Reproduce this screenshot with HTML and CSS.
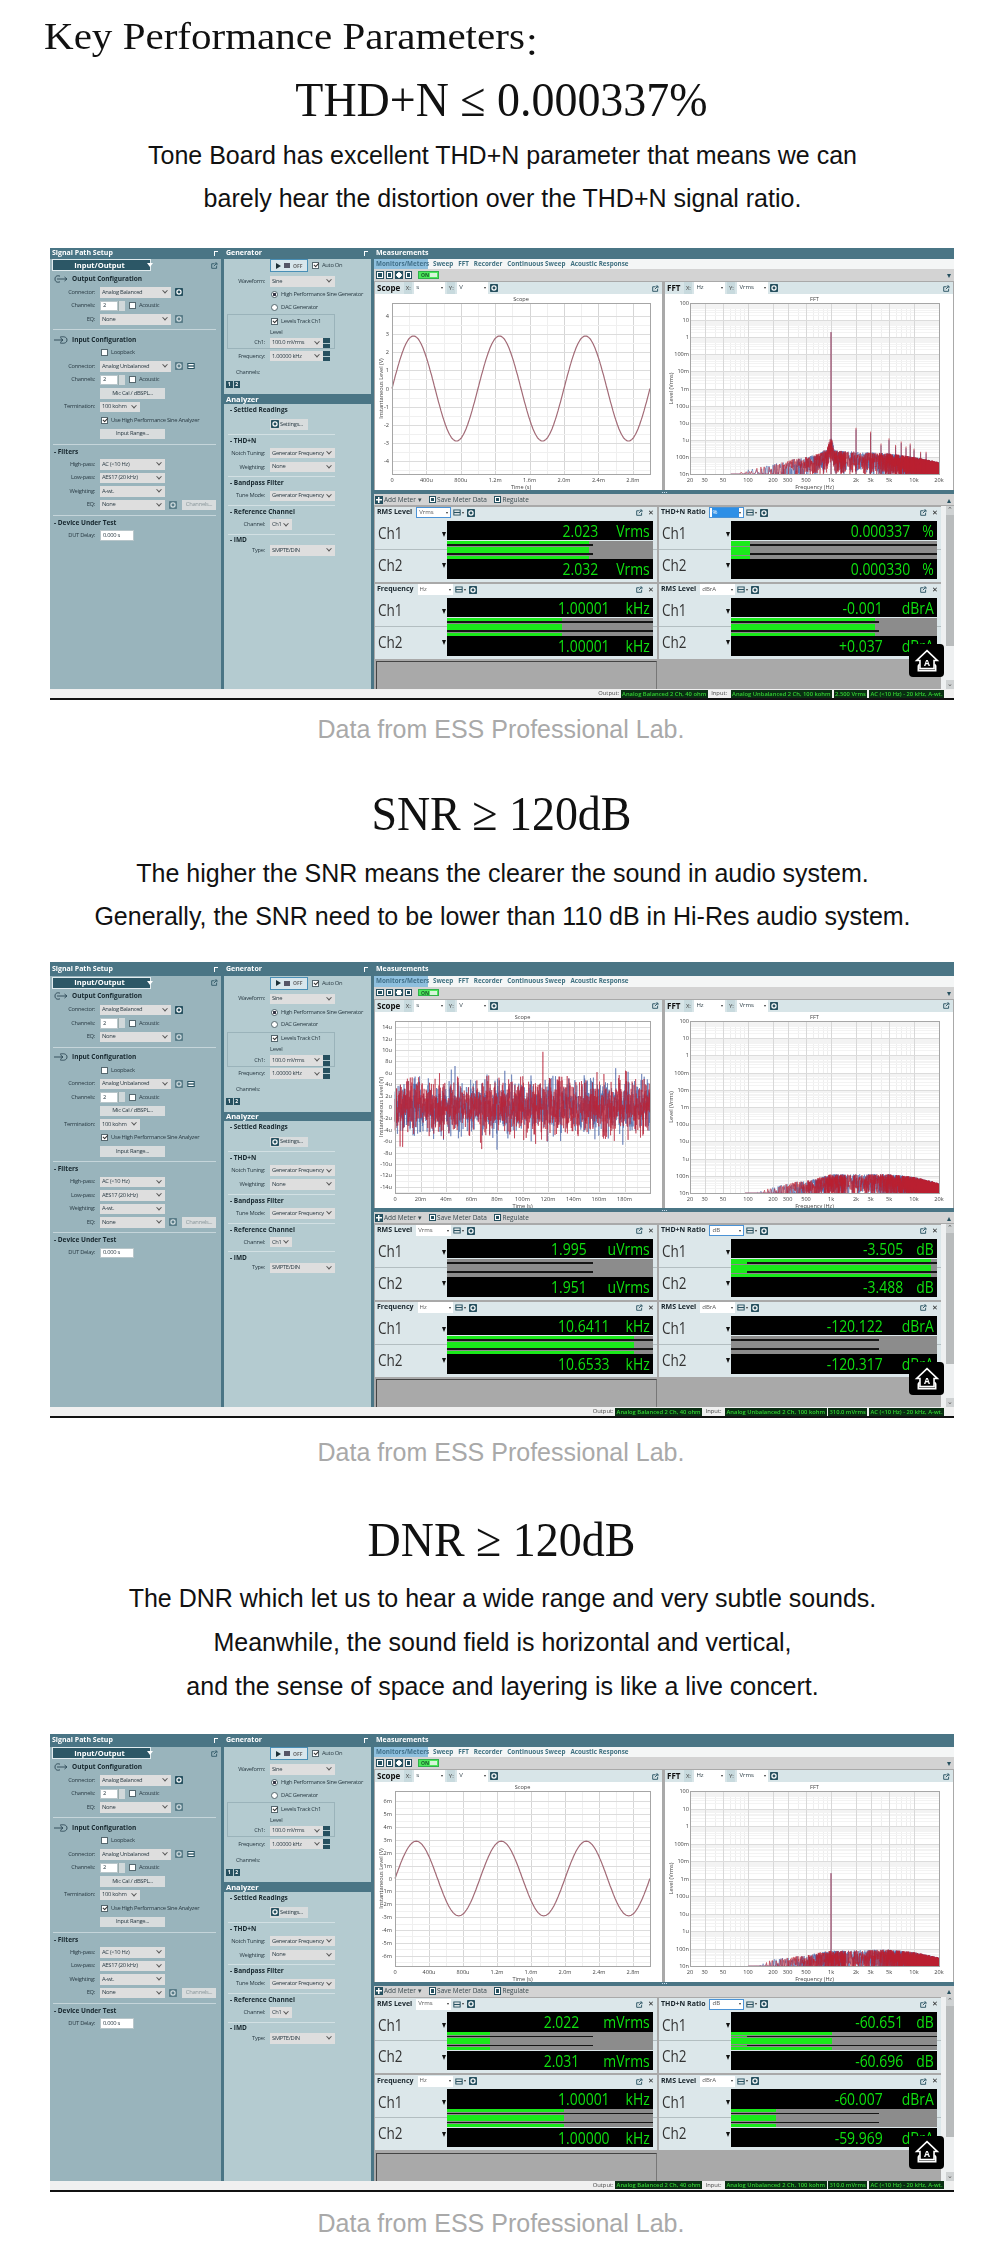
FILE: index.html
```html
<!DOCTYPE html>
<html lang="en">
<head>
<meta charset="utf-8">
<title>Key Performance Parameters</title>
<link rel="stylesheet" href="styles.css">
</head>
<body>
<svg class="defs" width="0" height="0" aria-hidden="true">
  <symbol id="i-gear" viewBox="0 0 10 10"><rect width="10" height="10" rx="1"/><circle cx="5" cy="5" r="2.6" fill="none" stroke="#fff" stroke-width="1.5"/></symbol>
  <symbol id="i-ext" viewBox="0 0 10 10"><path d="M1 2.500h4M1 2.500v6.500h7v-3.500" fill="none" stroke="#26505f" stroke-width="1.300"/><path d="M4 6l4-4M5.500 1.500h3v3" fill="none" stroke="#26505f" stroke-width="1.300"/></symbol>
  <symbol id="i-out" viewBox="0 0 14 8"><path d="M6 1.200C3.500.2 1 1 1 4s2.500 3.800 5 2.800" fill="none" stroke="#2b4653" stroke-width=".9"/><path d="M3 4h10M10.500 2l2.500 2-2.500 2" fill="none" stroke="#2b4653" stroke-width=".9"/></symbol>
  <symbol id="i-in" viewBox="0 0 14 8"><path d="M6 1.200c3-1 7-.5 7 2.800s-4 3.800-7 2.800" fill="none" stroke="#2b4653" stroke-width=".9"/><path d="M0 4h9M6.500 2L9 4 6.500 6" fill="none" stroke="#2b4653" stroke-width=".9"/></symbol>
  <symbol id="i-meter" viewBox="0 0 12 10"><rect x=".5" y=".5" width="11" height="9" fill="#26505f"/><rect x="2" y="2" width="8" height="2" fill="#fff"/><rect x="2" y="6" width="8" height="2" fill="#fff"/></symbol>
</svg>

<template id="analyzer">
  <div class="app">
    <div class="workspace">
      <aside class="side path">
        <div class="coltitle"><span>Signal Path Setup</span><span class="pin"></span></div>
        <div class="iorow"><div class="iosel"><span>Input/Output</span><span class="iotri"></span></div><svg class="ico ext pale"><use href="#i-ext"/></svg></div>
        <div class="sec sec-a"><svg class="secico"><use href="#i-out"/></svg>Output Configuration</div>
        <div class="row"><label>Connector:</label><span class="sel w71">Analog Balanced</span><svg class="ico gearb"><use href="#i-gear"/></svg></div>
        <div class="row"><label>Channels:</label><span class="num w18">2</span><span class="spin"></span><span class="chk"></span><span>Acoustic</span></div>
        <div class="row"><label>EQ:</label><span class="sel w71">None</span><svg class="ico gearb dim"><use href="#i-gear"/></svg></div>
        <div class="rule r3"></div>
        <div class="sec sec-b"><svg class="secico"><use href="#i-in"/></svg>Input Configuration</div>
        <div class="row"><label></label><span class="chk"></span><span>Loopback</span></div>
        <div class="row"><label>Connector:</label><span class="sel w71">Analog Unbalanced</span><svg class="ico gearb dim"><use href="#i-gear"/></svg><svg class="ico gearb"><use href="#i-meter"/></svg></div>
        <div class="row"><label>Channels:</label><span class="num w18">2</span><span class="spin"></span><span class="chk"></span><span>Acoustic</span></div>
        <div class="row"><label></label><span class="btn w65">Mic Cal / dBSPL...</span></div>
        <div class="row"><label>Termination:</label><span class="sel w40">100 kohm</span></div>
        <div class="row"><label></label><span class="chk on"></span><span>Use High Performance Sine Analyzer</span></div>
        <div class="row"><label></label><span class="btn w65">Input Range...</span></div>
        <div class="rule r3"></div>
        <div class="sec sec-c">- Filters</div>
        <div class="row"><label>High-pass:</label><span class="sel w65">AC (&lt;10 Hz)</span></div>
        <div class="row"><label>Low-pass:</label><span class="sel w65">AES17 (20 kHz)</span></div>
        <div class="row"><label>Weighting:</label><span class="sel w65">A-wt.</span></div>
        <div class="row"><label>EQ:</label><span class="sel w65">None</span><svg class="ico gearb dim"><use href="#i-gear"/></svg><span class="btn w34 off">Channels...</span></div>
        <div class="rule r3"></div>
        <div class="sec sec-c">- Device Under Test</div>
        <div class="row"><label>DUT Delay:</label><span class="num w34">0.000 s</span></div>
      </aside>

      <aside class="side gen">
        <div class="coltitle"><span>Generator</span><span class="pin"></span></div>
        <div class="row tall"><label></label><span class="runbtn"><span class="play"></span><span class="stop"></span><span>OFF</span></span><span class="chk on"></span><span>Auto On</span></div>
        <div class="row wave"><label>Waveform:</label><span class="sel w65">Sine</span></div>
        <div class="row r13"><label></label><span class="radio on"></span><span>High Performance Sine Generator</span></div>
        <div class="row r12"><label></label><span class="radio"></span><span>DAC Generator</span></div>
        <div class="frame">
          <div class="row r12"><label></label><span class="chk on"></span><span>Levels Track Ch1</span></div>
          <div class="row r10"><label></label><span>Level</span></div>
          <div class="row r11"><label>Ch1:</label><span class="sel w53" data-slot="level"></span><span class="updown"></span></div>
        </div>
        <div class="row"><label>Frequency:</label><span class="sel w53">1.00000 kHz</span><span class="updown"></span></div>
        <div class="row chan"><span class="free">Channels:</span></div>
        <div class="chanbtns"><span>1</span><span>2</span></div>
        <div class="coltitle band"><span>Analyzer</span></div>
        <div class="sec sec-d">- Settled Readings</div>
        <div class="row sett"><label></label><span class="setbtn"><svg class="ico"><use href="#i-gear"/></svg>Settings...</span></div>
        <div class="rule rs"></div>
        <div class="sec sec-d">- THD+N</div>
        <div class="row"><label>Notch Tuning:</label><span class="sel w65">Generator Frequency</span></div>
        <div class="row"><label>Weighting:</label><span class="sel w65">None</span></div>
        <div class="rule rs"></div>
        <div class="sec sec-d">- Bandpass Filter</div>
        <div class="row"><label>Tune Mode:</label><span class="sel w65">Generator Frequency</span></div>
        <div class="rule rs"></div>
        <div class="sec sec-d">- Reference Channel</div>
        <div class="row"><label>Channel:</label><span class="sel w22">Ch1</span></div>
        <div class="rule rs"></div>
        <div class="sec sec-d sec-tight">- IMD</div>
        <div class="row r11"><label>Type:</label><span class="sel w65">SMPTE/DIN</span></div>
      </aside>

      <main class="measure">
        <div class="coltitle"><span>Measurements</span></div>
        <nav class="tabs"><span class="tab active">Monitors/Meters</span><span class="tab">Sweep</span><span class="tab">FFT</span><span class="tab">Recorder</span><span class="tab">Continuous Sweep</span><span class="tab">Acoustic Response</span></nav>
        <div class="tools">
          <span class="tool"></span><span class="tool"></span><span class="tool round"></span><span class="tool"></span>
          <span class="onsw"><span>ON</span><i></i></span>
          <span class="filter">&#9662;</span>
        </div>
        <div class="charts">
          <section class="chart scope">
            <header class="chead"><b>Scope</b><span class="ax">X:</span><span class="cbo">s</span><span class="ax">Y:</span><span class="cbo">V</span><svg class="ico gsm"><use href="#i-gear"/></svg><svg class="ico ext"><use href="#i-ext"/></svg></header>
            <div class="plot" data-plot="scope"></div>
          </section>
          <section class="chart fft">
            <header class="chead"><b>FFT</b><span class="ax">X:</span><span class="cbo">Hz</span><span class="ax">Y:</span><span class="cbo">Vrms</span><svg class="ico gsm"><use href="#i-gear"/></svg><svg class="ico ext"><use href="#i-ext"/></svg></header>
            <div class="plot" data-plot="fft"></div>
          </section>
        </div>
        <div class="split"><i></i><i></i><i></i></div>
        <div class="tools two">
          <span class="mbtn"><span class="plus"></span>Add Meter &#9662;</span>
          <span class="mbtn"><span class="tool save"></span>Save Meter Data</span>
          <span class="mbtn"><span class="tool reg"></span>Regulate</span>
          <span class="filter">&#9652;</span>
        </div>
        <div class="meterarea">
          <div class="meterwrap">
            <div class="meters" data-slot="meters"></div>
            <div class="empty"></div>
          </div>
          <div class="scroll"><span class="arrow">&#8963;</span><span class="thumb"></span><span class="trk"></span><span class="arrow">&#8964;</span></div>
        </div>
      </main>
    </div>
    <footer class="status">
      <span>Output:</span><span class="pill">Analog Balanced 2 Ch, 40 ohm</span>
      <span>Input:</span><span class="pill">Analog Unbalanced 2 Ch, 100 kohm</span><span class="pill" data-slot="inputlevel"></span><span class="pill">AC (&lt;10 Hz) - 20 kHz, A-wt.</span>
    </footer>
    <div class="badge">
      <svg viewBox="0 0 24 24"><path d="M12 2.500L21.500 11.500H18.500V19H5.500V11.500H2.500Z" fill="none" stroke="#fff" stroke-width="1.500"/><path d="M5 15l-1 1.500V21H20v-4.500L19 15" fill="none" stroke="#fff" stroke-width="1.500"/><text x="12" y="16.500" text-anchor="middle">A</text></svg>
    </div>
  </div>
</template>

<template id="meter">
  <article class="meter">
    <header class="mhead"><b data-m="title"></b><span class="cbo" data-m="unit"></span><svg class="ico mi"><use href="#i-meter"/></svg><span class="mtri"></span><svg class="ico gsm"><use href="#i-gear"/></svg><svg class="ico ext"><use href="#i-ext"/></svg><span class="cross">&#10005;</span></header>
    <div class="chrow first">
      <div class="chlab"><span>Ch1</span><i></i></div>
      <div class="chval"><div class="readout" data-m="r1"></div><div class="bars" data-m="b1"></div></div>
    </div>
    <div class="chrow">
      <div class="chlab"><span>Ch2</span><i></i></div>
      <div class="chval"><div class="bars" data-m="b2"></div><div class="readout" data-m="r2"></div></div>
    </div>
  </article>
</template>

<h1 class="lead">Key Performance Parameters<span class="fwc">：</span></h1>

<section class="block thd">
  <h2 class="metric">THD+N ≤ 0.000337%</h2>
  <div class="copy">
    <p>Tone Board has excellent THD+N parameter that means we can</p>
    <p>barely hear the distortion over the THD+N signal ratio.</p>
  </div>
  <div class="slot" data-panel="thd"></div>
  <p class="credit">Data from ESS Professional Lab.</p>
</section>

<section class="block snr">
  <h2 class="metric">SNR ≥ 120dB</h2>
  <div class="copy">
    <p>The higher the SNR means the clearer the sound in audio system.</p>
    <p>Generally, the SNR need to be lower than 110 dB in Hi-Res audio system.</p>
  </div>
  <div class="slot" data-panel="snr"></div>
  <p class="credit">Data from ESS Professional Lab.</p>
</section>

<section class="block dnr">
  <h2 class="metric">DNR ≥ 120dB</h2>
  <div class="copy">
    <p>The DNR which let us to hear a wide range and very subtle sounds.</p>
    <p>Meanwhile, the sound field is horizontal and vertical,</p>
    <p>and the sense of space and layering is like a live concert.</p>
  </div>
  <div class="slot" data-panel="dnr"></div>
  <p class="credit">Data from ESS Professional Lab.</p>
</section>

<script src="app.js"></script>
</body>
</html>
```
FILE: styles.css
```css
*{box-sizing:border-box}
html,body{margin:0;padding:0;background:#fff}
body{font-family:"Liberation Sans",Arial,sans-serif;color:#111}
.defs{position:absolute}
.lead{font:400 38px/44px "Liberation Serif","Noto Sans CJK SC",serif;margin:14px 0 0 44px;width:max-content;transform:scaleX(1.08);transform-origin:left center;white-space:nowrap;color:#111}
.fwc{display:inline-block;font-size:30px;margin-left:-1px;transform:translateY(5px)}
.block{display:flex;flex-direction:column;align-items:stretch}
.metric{font:400 48px/60px "Liberation Serif",serif;text-align:center;margin:0;padding-left:3px;transform:scaleX(.957);color:#111}
.copy{padding-left:5px}
.copy p{font-size:25px;line-height:43px;margin:0;text-align:center;white-space:nowrap}
.credit{font-size:25px;line-height:30px;margin:0;padding-left:2px;text-align:center;color:#a9a9a9}
.thd{margin-top:9px}.thd .copy{margin-top:3.5px}.thd .slot{margin-top:28.5px}.thd .credit{margin-top:14px}
.snr{margin-top:39.5px}.snr .copy{margin-top:8px}.snr .slot{margin-top:24.5px}.snr .credit{margin-top:19px}
.dnr{margin-top:42.5px}.dnr .copy{margin-top:6px}.dnr .copy p{line-height:44px}.dnr .slot{margin-top:26px}.dnr .credit{margin-top:16.5px}
.slot{margin-left:50px;width:904px}

.app{position:relative;display:flex;flex-direction:column;height:var(--h);font:400 6px/1.2 "Open Sans",sans-serif;color:#2a3b44;background:#f0f0f0;border-bottom:2px solid #111;filter:blur(.25px)}
.h-thd{--h:452px;--t:10.5px}.h-snr{--h:456px;--t:14px}.h-dnr{--h:458px;--t:13px}
.workspace{flex:1;display:flex;min-height:0;background:#4a7585}
.side{display:flex;flex-direction:column;flex:none}
.path{width:171px;background:#99b4bc;margin-right:3px}
.gen{width:147px;background:#b4cbd0;margin-right:3px}
.coltitle{height:var(--t);flex:none;background:#4a7585;color:#fff;font-weight:700;font-size:7px;display:flex;align-items:center;justify-content:space-between;padding:0 3px 0 2px;white-space:nowrap}
.pin{width:4px;height:5px;border-left:1px solid #fff;border-top:1px solid #fff}
.iorow{height:13px;display:flex;align-items:center;justify-content:space-between;padding:0 3px 0 2px;flex:none}
.iosel{width:99px;height:12px;background:#2c5766;border:1px solid #e2ecef;color:#fff;font-weight:700;font-size:7.5px;display:flex;align-items:center;justify-content:center;gap:22px;padding-left:24px}
.iotri{width:0;height:0;border:3px solid transparent;border-top:4px solid #fff;border-bottom:0}
.sec{display:flex;align-items:center;font-weight:700;font-size:6.5px;color:#16262d;white-space:nowrap;flex:none;padding-left:4px}
.sec-a{height:14px}.sec-b{height:13px;margin-top:3px}.sec-c{height:12px;margin-top:1px;padding-left:4px}
.sec-d{height:11.5px;padding-left:6px}.sec-tight{height:10px}
.secico{width:14px;height:8px;margin-right:4px}
.row{height:13.5px;display:flex;align-items:center;gap:3px;flex:none;white-space:nowrap;font-size:5.8px;letter-spacing:-.3px}
.row label{width:45px;text-align:right;margin-right:2px;flex:none;color:#2a3b44}
.gen .row{height:13.8px}
.gen .row label{width:41px;margin-right:2px}
.gen .r13{height:13px}.gen .r12{height:12px}.gen .r11{height:11px}.gen .r10{height:10px}
.gen .tall{height:14px}.wave{margin-top:2px}.gen .chan{margin-top:3.2px;height:12px}.gen .sett{margin-top:2px;height:14px}
.free{padding-left:12px}
.rule{height:1px;background:#c5d5da;flex:none}
.r3{margin:3px 5px 0 3px}
.rs{margin:2.5px 36px 0 4px;background:#d2e0e3}
.sel,.num,.btn{height:10.5px;display:flex;align-items:center;flex:none;padding:0 2px}
.sel{background:#dedede;justify-content:flex-start}
.sel::after{content:"";margin-left:auto;width:3px;height:3px;border-right:.7px solid #555;border-bottom:.7px solid #555;transform:rotate(45deg) translate(-1px,-1px);flex:none;margin-right:2px}
.num{background:#fff;border:.5px solid #b8c6ca}
.btn{background:#d8dcdd;justify-content:center;height:10.5px}
.btn.off{color:#8a979b;margin-left:2px}
.w71{width:71px}.w65{width:65px}.w53{width:53px}.w40{width:40px}.w34{width:34px}.w22{width:22px}.w18{width:18px}
.spin{width:7px;height:10px;background:#d0d8da;margin-left:-3px;flex:none;border-left:.5px solid #9aa}
.chk{width:7px;height:7px;background:#fff;border:.7px solid #55676e;flex:none;margin-left:1px}
.chk.on::after{content:"";display:block;width:4px;height:2px;border-left:.8px solid #333;border-bottom:.8px solid #333;transform:rotate(-45deg) translate(.6px,.6px)}
.radio{width:7px;height:7px;border-radius:50%;background:#fff;border:.7px solid #55676e;flex:none;margin-left:1px}
.radio.on{background:radial-gradient(circle,#334 0 1.4px,#fff 1.7px)}
.ico{width:8px;height:8px;flex:none;fill:#26505f}
.gearb{margin-left:1px;width:8px;height:8px}
.gearb.dim{opacity:.55}
.updown{width:7px;height:10.5px;background:linear-gradient(#26505f 0 45%,#b4cbd0 45% 55%,#26505f 55%);margin-left:-3px;flex:none}
.frame{border:1px solid #9ab3ba;margin:1px 36px 0 3px;height:35px;flex:none}
.frame .row label{width:37px}
.runbtn{width:38px;height:13px;border:1px solid #4a8fb6;background:#d8e6ec;display:flex;align-items:center;gap:3px;padding-left:5px;flex:none;color:#666;font-weight:700;font-size:5px;letter-spacing:0}
.play{width:0;height:0;border:3px solid transparent;border-left:5px solid #1c3038;border-right:0}
.stop{width:6px;height:5px;background:#556}
.chanbtns{display:flex;gap:1px;padding-left:2px;height:7px;margin-top:2.5px;flex:none}
.chanbtns span{width:6.500px;height:7px;background:#26505f;color:#fff;font-weight:700;font-size:5px;text-align:center;line-height:7px}
.band{height:9.5px;margin-top:6.5px;font-size:7.5px;padding-left:2px}
.setbtn{height:10.5px;width:38px;background:#d8dcdd;display:flex;align-items:center;gap:1px;padding-left:1px;flex:none}

.measure{flex:1;min-width:0;display:flex;flex-direction:column;background:#a9a9a9}
.tabs{height:10.5px;flex:none;background:#f4f6f6;display:flex;align-items:center;font-weight:700;font-size:6.3px;color:#3f7080;white-space:nowrap;gap:5px}
.tab{height:100%;display:flex;align-items:center}
.tab.active{background:#8fc0de;padding:0 3px 0 2px;width:54px;color:#41708a}
.tools{height:12px;flex:none;background:#d3d3d3;display:flex;align-items:center;gap:2px;padding:0 3px 0 2px}
.tool{width:7.500px;height:7.500px;background:#26505f;flex:none;border:1.200px solid #26505f;box-shadow:inset 0 0 0 1px #fff}
.tool.round{background:radial-gradient(circle,#fff 0 2.5px,#26505f 2.8px);box-shadow:none}
.onsw{margin-left:4px;width:21px;height:7.500px;background:#4ce85a;border:1px solid #2fb04a;display:flex;align-items:center;justify-content:space-between;font-weight:700;font-size:5px;color:#16542a;padding:0 1px 0 2px}
.onsw i{width:7px;height:4px;background:#d5f5d8}
.filter{margin-left:auto;color:#26505f;font-size:8px;line-height:1}
.charts{flex:1;min-height:0;display:flex;gap:3px;padding-top:1px;padding-left:1px;background:#a9a9a9}
.chart{display:flex;flex-direction:column;min-width:0;background:#fff}
.scope{width:287px}.fft{width:288px;margin-right:1px}
.chead{height:12px;flex:none;background:#d8e5e8;display:flex;align-items:center;gap:2px;padding:0 3px 0 2px}
.chead b{font-size:8px;color:#111;margin-right:2px}
.chead .ax{color:#444;width:8px;text-align:center;background:#c8dade;height:100%;line-height:12px}
.chead .cbo{width:31px;height:100%;background:#fff;display:flex;align-items:center;padding-left:2px}
.cbo::after{content:"";margin-left:auto;margin-right:2px;border:1.500px solid transparent;border-top:2px solid #333;border-bottom:0}
.gsm{width:8px;height:8px}
.ext{margin-left:auto;width:7px;height:7px}
.ext.pale{opacity:.9}
.plot{flex:1;min-height:0}
.plot svg{display:block}
.plot text{font:400 5.6px "Open Sans",sans-serif;fill:#444}
.split{height:4px;flex:none;background:#4a7585;display:flex;justify-content:center;align-items:center;gap:1px}
.split i{width:1px;height:1px;background:#cde}
.two{height:11px;gap:7px;padding-left:1px;font-size:6.5px}
.mbtn{display:flex;align-items:center;gap:1px;color:#3a4a50;white-space:nowrap}
.plus{width:8px;height:8px;background:linear-gradient(#fff,#fff) center/6px 1.5px no-repeat,linear-gradient(#fff,#fff) center/1.5px 6px no-repeat,#26505f}
.meterarea{flex:none;height:184px;display:flex;background:#a9a9a9;padding-top:1.5px}
.meterwrap{width:567px;flex:none;padding-left:1px;display:flex;flex-direction:column}
.meters{display:grid;grid-template-columns:282px 282px;gap:2px;flex:none}
.empty{width:281px;height:40px;margin-top:2.5px;margin-left:1px;border:1px solid #444;border-bottom:0;border-right-color:#777}
.scroll{flex:1;margin-top:-1px;background:#eef0f1;display:flex;flex-direction:column;align-items:flex-end;color:#555;font-size:7px;line-height:8px}
.arrow{width:8px;height:9px;text-align:center;background:#cfd2d3}
.thumb{width:8px;flex:0 0 131px;background:#b9bcbd}
.trk{flex:1}

.meter{height:75px;background:#dce7ea;display:flex;flex-direction:column}
.mhead{height:12px;flex:none;display:flex;align-items:center;gap:2px;padding:0 3px 0 2px;white-space:nowrap}
.mhead b{font-size:7px;color:#17232a;margin-right:2px}
.mhead .cbo{width:35px;height:11px;background:#fff;display:flex;align-items:center;padding-left:2px;color:#555;flex:none}
.mhead .cbo.focus{border:1px solid #4b93d6}
.mhead .cbo.picked{border:1px solid #4b93d6;background:linear-gradient(90deg,#fff 0 6%,#2d8fe6 6% 88%,#fff 88%);color:#fff}
.mi{width:8px;height:7px}
.mtri{border:1.500px solid transparent;border-top:2px solid #333;border-bottom:0;margin-left:-1px;margin-right:1px}
.cross{font-size:6.5px;color:#222;margin-left:3px;width:6px}
.chrow{display:flex;height:31px;flex:none}
.chrow.first{border-bottom:1px solid #b3bec1}
.chlab{width:72px;flex:none;display:flex;align-items:center;justify-content:space-between;padding:0 1px 0 3px;color:#333}
.chlab span{font-size:16.5px;line-height:1;display:inline-block;transform:scaleX(.82);transform-origin:left center}
.chlab i{border:2.500px solid transparent;border-top:5px solid #111;border-bottom:0;margin-top:1px}
.chval{width:206px;flex:none;display:flex;flex-direction:column;padding-top:2px;gap:.5px}
.chrow:not(.first) .chval{padding-top:0}
.readout{height:19.5px;background:#000;flex:none}
.rin{width:calc(100%/.82);height:100%;transform:scaleX(.82);transform-origin:left center;display:flex;justify-content:flex-end;align-items:center;font-size:17px;line-height:1;color:#10e010;padding-right:4px;white-space:nowrap}
.bars{height:9px;flex:none;display:flex;flex-direction:column;background:#8c8c8c}
.stripe{height:3px;flex:none;display:flex}
.mid{height:1.5px;flex:none;display:flex;margin:.75px 0}
.stripe i{background:#1aea1a;display:block;height:100%}
.mid i{display:block;height:100%}
.mid .g{background:#1aea1a}.mid .k{background:#151515}

.status{height:9px;flex:none;display:flex;align-items:center;justify-content:flex-end;gap:1.5px;padding-right:10px;background:#f0f0f0;font-size:5.8px;white-space:nowrap;color:#444}
.pill{background:#0a2e12;color:#32d132;font-weight:600;height:8px;line-height:8px;padding:0 1.5px}
.status span:nth-child(3){margin-left:2px;margin-right:2px}
.badge{position:absolute;right:10px;bottom:21px;width:35px;height:33px;background:#000;border-radius:4px;display:flex;align-items:center;justify-content:center}
.badge svg{width:26px;height:26px}
.badge text{font:700 8px "Open Sans",sans-serif;fill:#fff}
```
FILE: app.js
```js
(function () {
  function rng(seed) {
    var s = seed;
    return function () { s = (s * 1664525 + 1013904223) % 4294967296; return s / 4294967296; };
  }
  var HARM = [[2000,5e-6],[3000,3e-6],[4000,6e-7],[5000,1.2e-6],[6000,5e-7],[7000,8e-7],[8000,4e-7],[9000,6e-7],[10000,3e-7],[12000,2e-7],[14000,2e-7]];
  var PANELS = {
    thd: { level: "100.0 mVrms", input: "2.500 Vrms", plotL: 17,
      scope: { kind: "sine", amp: 2.9, ymax: 4.72, ylab: [4,3,2,1,0,-1,-2,-3,-4], suffix: "", xmax: 3, xlab: [[0,"0"],[.4,"400u"],[.8,"800u"],[1.2,"1.2m"],[1.6,"1.6m"],[2,"2.0m"],[2.4,"2.4m"],[2.8,"2.8m"]] },
      fft: { env: [[60,3e-9],[70,8e-9],[100,1.5e-8],[200,3e-8],[400,7e-8],[700,1.2e-7],[900,2.5e-7],[980,1e-6],[1020,1e-6],[1100,2e-7],[2000,1.6e-7],[5000,1.3e-7],[10000,8e-8],[20000,4e-8]], peaks: [[1000,2]].concat(HARM) },
      meters: [
        ["RMS Level","Vrms","focus",["2.023","2.032"],"Vrms",18,69,0,71],
        ["THD+N Ratio","%","picked",["0.000337","0.000330"],"%",12,9,9,100],
        ["Frequency","Hz","",["1.00001","1.00001"],"kHz",16,56,0,100],
        ["RMS Level","dBrA","",["-0.001","+0.037"],"dBrA",19,70,0,72]] },
    snr: { level: "100.0 mVrms", input: "310.0 mVrms", plotL: 20,
      scope: { kind: "noise", ymax: 15.1, ylab: [14,12,10,8,6,4,2,0,-2,-4,-6,-8,-10,-12,-14], suffix: "u", xmax: 200, xlab: [[0,"0"],[20,"20m"],[40,"40m"],[60,"60m"],[80,"80m"],[100,"100m"],[120,"120m"],[140,"140m"],[160,"160m"],[180,"180m"]] },
      fft: { env: [[90,5e-9],[150,1.2e-8],[300,3e-8],[700,6e-8],[1000,1e-7],[5000,1e-7],[10000,7e-8],[20000,3e-8]], peaks: [] },
      meters: [
        ["RMS Level","Vrms","",["1.995","1.951"],"uVrms",21,0,0,71],
        ["THD+N Ratio","dB","focus",["-3.505","-3.488"],"dB",13,97,8,100],
        ["Frequency","Hz","",["10.6411","10.6533"],"kHz",16,91,0,100],
        ["RMS Level","dBrA","",["-120.122","-120.317"],"dBrA",19,0,0,72]] },
    dnr: { level: "100.0 mVrms", input: "310.0 mVrms", plotL: 20,
      scope: { kind: "sine", amp: 2.9, ymax: 6.8, ylab: [6,5,4,3,2,1,0,-1,-2,-3,-4,-5,-6], suffix: "m", xmax: 3, xlab: [[0,"0"],[.4,"400u"],[.8,"800u"],[1.2,"1.2m"],[1.6,"1.6m"],[2,"2.0m"],[2.4,"2.4m"],[2.8,"2.8m"]] },
      fft: { env: [[100,5e-9],[200,2e-8],[400,3e-8],[1000,6e-8],[5000,7e-8],[10000,5e-8],[20000,2.5e-8]], peaks: [[1000,2e-3]] },
      meters: [
        ["RMS Level","Vrms","",["2.022","2.031"],"mVrms",24,21,0,71],
        ["THD+N Ratio","dB","focus",["-60.651","-60.696"],"dB",13,49,8,100],
        ["Frequency","Hz","",["1.00001","1.00000"],"kHz",16,57,0,100],
        ["RMS Level","dBrA","",["-60.007","-59.969"],"dBrA",19,22,0,72]] }
  };

  function line(x1, y1, x2, y2, c) {
    return '<line x1="' + x1 + '" y1="' + y1 + '" x2="' + x2 + '" y2="' + y2 + '" stroke="' + c + '" stroke-width="1"/>';
  }
  function text(x, y, s, anchor, extra) {
    return '<text x="' + x + '" y="' + y + '" text-anchor="' + anchor + '"' + (extra || "") + ">" + s + "</text>";
  }
  function frame(w, h, L, R, T, B, inner, title, ytitle, xtitle) {
    return '<svg width="' + w + '" height="' + h + '" viewBox="0 0 ' + w + " " + h + '">' + inner +
      '<rect x="' + (L + .5) + '" y="' + (T + .5) + '" width="' + (R - L) + '" height="' + (B - T) + '" fill="none" stroke="#a6a6a6"/>' +
      text((L + R) / 2, 7, title, "middle") +
      text((L + R) / 2, h - 1.5, xtitle, "middle") +
      text(0, 0, ytitle, "middle", ' transform="translate(8,' + (T + B) / 2 + ') rotate(-90)"') + "</svg>";
  }

  function drawScope(el, c, L) {
    var w = el.clientWidth, h = el.clientHeight, R = 275, T = 9, B = h - 16, out = "", pw = R - L, ph = B - T;
    var X = function (v) { return L + v / c.xmax * pw; }, Y = function (v) { return T + ph / 2 - v / c.ymax * ph / 2; };
    c.xlab.forEach(function (t, i) {
      var x = Math.round(X(t[0])) + .5, mx = Math.round(X(t[0] + (c.xlab[1][0] / 2))) + .5;
      out += line(mx, T, mx, B, "#efefef");
      if (i) out += line(x, T, x, B, "#d6d6d6");
      out += text(X(t[0]), B + 8, t[1], "middle");
    });
    var step = Math.abs(c.ylab[0] - c.ylab[1]);
    c.ylab.forEach(function (v) {
      var y = Math.round(Y(v)) + .5, my = Math.round(Y(v - step / 2)) + .5;
      out += line(L, y, R, y, "#dcdcdc") + line(L, my, R, my, "#f0f0f0");
      out += text(L - 3, Y(v) + 2, v + (v ? c.suffix : ""), "end");
    });
    var i, d;
    if (c.kind === "sine") {
      d = "";
      for (i = 0; i <= 300; i++) d += (i ? "L" : "M") + X(i / 100).toFixed(1) + " " + Y(c.amp * Math.sin(2 * Math.PI * i / 100)).toFixed(1);
      out += '<path d="' + d + '" fill="none" stroke="#a26a76" stroke-width="1.200"/>';
    } else {
      [["#4d69ac", 7, [[47, 7.2], [80, -7.5]]], ["#b8253a", 11, [[116, 9.7], [68, -7.4], [6, -7]]]].forEach(function (ch) {
        var r = rng(ch[1]); d = "";
        var n = 1500, sp = {};
        ch[2].forEach(function (s) { sp[Math.round(s[0] / 200 * n)] = s[1]; });
        for (i = 0; i <= n; i++) {
          var g = (r() + r() + r() + r() - 2) * 3.9;
          if (sp[i] !== undefined) g = sp[i];
          d += (i ? "L" : "M") + X(i / n * 200).toFixed(1) + " " + Y(g).toFixed(1);
        }
        out += '<path d="' + d + '" fill="none" stroke="' + ch[0] + '" stroke-width=".7" stroke-opacity=".82"/>';
      });
    }
    el.innerHTML = frame(w, h, L, R, T, B, out, "Scope", "Instantaneous Level (V)", "Time (s)");
  }

  function envAt(env, f) {
    if (f < env[0][0]) return 0;
    for (var i = 1; i < env.length; i++) {
      if (f <= env[i][0]) {
        var a = env[i - 1], b = env[i], t = Math.log(f / a[0]) / Math.log(b[0] / a[0]);
        return Math.pow(10, Math.log10(a[1]) + t * (Math.log10(b[1]) - Math.log10(a[1])));
      }
    }
    return env[env.length - 1][1];
  }

  function drawFFT(el, c) {
    var w = el.clientWidth, h = el.clientHeight, L = 25, R = 274, T = 9, B = h - 16, pw = R - L, ph = B - T, out = "";
    var X = function (f) { return L + Math.log10(f / 20) / 3 * pw; }, Y = function (v) { return Math.min(B, T + (2 - Math.log10(v)) / 10 * ph); };
    [40,60,70,80,90,400,600,700,800,900,4000,6000,7000,8000,9000].forEach(function (f) { var x = Math.round(X(f)) + .5; out += line(x, T, x, B, "#eeeeee"); });
    var labs = [[20,"20"],[30,"30"],[50,"50"],[100,"100"],[200,"200"],[300,"300"],[500,"500"],[1000,"1k"],[2000,"2k"],[3000,"3k"],[5000,"5k"],[10000,"10k"],[20000,"20k"]];
    var i, k;
    for (k = 0; k < 10; k++) {
      [.301,.477,.602,.699,.778,.845,.903,.954].forEach(function (m) {
        var y = Math.round(T + (k + 1 - m) / 10 * ph) + .5; out += line(L, y, R, y, "#f3f3f3");
      });
    }
    labs.forEach(function (l) {
      var x = Math.round(X(l[0])) + .5;
      if (l[0] !== 20) out += line(x, T, x, B, "#d8d8d8");
      out += text(X(l[0]), B + 8, l[1], "middle");
    });
    ["100","10","1","100m","10m","1m","100u","10u","1u","100n","10n"].forEach(function (s, n) {
      var y = T + n / 10 * ph; out += line(L, Math.round(y) + .5, R, Math.round(y) + .5, "#dcdcdc");
      out += text(L - 1, y + 2, s, "end");
    });
    [["#4d69ac", 23], ["#bb2030", 41]].forEach(function (ch) {
      var r = rng(ch[1]), d = "", f = 20;
      while (f <= 20000) {
        f += f < 1500 ? 3 : 11;
        var e = envAt(c.env, f), v;
        if (!e) continue;
        v = e * 1.25 * Math.pow(10, -Math.abs(r() + r() - 1) * 1.5);
        d += (d ? "L" : "M") + X(Math.min(f, 20000)).toFixed(2) + " " + Y(v).toFixed(1);
      }
      out += '<path d="' + d + '" fill="none" stroke="' + ch[0] + '" stroke-width=".6" stroke-opacity=".9"/>';
      c.peaks.forEach(function (p) {
        var x = X(p[0]).toFixed(1), scale = ch[1] === 41 ? 1 : .8;
        out += '<path d="M' + x + " " + B + "V" + Y(p[1] * (p[0] === 1000 ? 1 : scale)).toFixed(1) + '" stroke="' + ch[0] + '" stroke-width=".9" opacity=".8"/>';
      });
    });
    el.innerHTML = frame(w, h, L, R, T, B, out, "FFT", "Level (Vrms)", "Frequency (Hz)");
  }

  function bars(host, spec) {
    function fill(pct, cls) {
      var i = document.createElement("i");
      if (cls) i.className = cls;
      i.style.width = pct + "%";
      return i;
    }
    function stripe() { var s = document.createElement("div"); s.className = "stripe"; s.appendChild(fill(spec[0])); return s; }
    var mid = document.createElement("div");
    mid.className = "mid";
    mid.appendChild(fill(spec[1], "g"));
    mid.appendChild(fill(spec[2] - spec[1], "k"));
    host.appendChild(stripe()); host.appendChild(mid); host.appendChild(stripe());
  }

  function readout(host, value, unit, gap) {
    var r = document.createElement("div");
    r.className = "rin";
    r.style.gap = (gap / .82).toFixed(1) + "px";
    var a = document.createElement("span"); a.textContent = value;
    var b = document.createElement("span"); b.textContent = unit;
    r.appendChild(a); r.appendChild(b);
    host.appendChild(r);
  }

  var app = document.getElementById("analyzer"), met = document.getElementById("meter");
  document.querySelectorAll("[data-panel]").forEach(function (slot) {
    var key = slot.getAttribute("data-panel"), cfg = PANELS[key];
    var node = app.content.cloneNode(true);
    node.querySelector(".app").classList.add("h-" + key);
    node.querySelector('[data-slot="level"]').textContent = cfg.level;
    node.querySelector('[data-slot="inputlevel"]').textContent = cfg.input;
    var host = node.querySelector('[data-slot="meters"]');
    cfg.meters.forEach(function (m) {
      var n = met.content.cloneNode(true), q = function (s) { return n.querySelector('[data-m="' + s + '"]'); };
      q("title").textContent = m[0];
      q("unit").textContent = m[1];
      if (m[2]) q("unit").classList.add(m[2]);
      readout(q("r1"), m[3][0], m[4], m[5]);
      readout(q("r2"), m[3][1], m[4], m[5]);
      bars(q("b1"), [m[6], m[7], m[8]]);
      bars(q("b2"), [m[6], m[7], m[8]]);
      host.appendChild(n);
    });
    slot.appendChild(node);
    drawScope(slot.querySelector('[data-plot="scope"]'), cfg.scope, cfg.plotL);
    drawFFT(slot.querySelector('[data-plot="fft"]'), cfg.fft);
  });
})();
```
